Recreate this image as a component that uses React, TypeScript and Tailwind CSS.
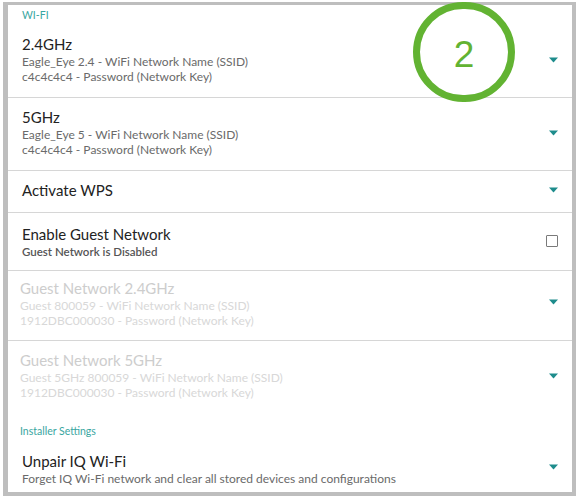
import React from "react";

const font = { fontFamily: "Lato, 'Open Sans', sans-serif" };

function Arrow() {
  return (
    <svg width="9" height="6" viewBox="0 0 9 6" className="block">
      <path d="M0 0.5 L9 0.5 L4.5 5.5 Z" fill="#1e8c8c" />
    </svg>
  );
}

type RowProps = {
  title: string;
  lines?: string[];
  disabled?: boolean;
  h: string;
  pt: string;
  divider?: boolean;
  arrowTop?: string;
};

function Row({ title, lines = [], disabled, h, pt, divider = true, arrowTop }: RowProps) {
  return (
    <div className={`relative flex ${h} ${divider ? "border-b border-[#d6d6d6]" : ""}`}>
      <div className={`flex-1 ${pt} ${disabled ? "pl-[12px]" : "pl-[14px]"}`}>
        <div className={`text-[15px] leading-[20px] ${disabled ? "text-[#cdcdcd]" : "text-[#222222]"}`}>{title}</div>
        {lines.map((l) => (
          <div
            key={l}
            className={`text-[12px] leading-[15px] ${disabled ? "text-[#d8d8d8]" : "text-[#6a6a6a]"}`}
          >
            {l}
          </div>
        ))}
      </div>
      {arrowTop && (
        <div className={`absolute right-[14px] ${arrowTop}`}>
          <Arrow />
        </div>
      )}
    </div>
  );
}

export default function App() {
  return (
    <div className="w-[580px] h-[499px] bg-white relative overflow-hidden" style={font}>
      <div className="ml-[3px] mt-[2px] w-[573px] h-[494px] border-l-[5px] border-t-[3px] border-r-[4px] border-b-[4px] border-[#bebebe] flex flex-col">
        <div className="h-[24px] pt-[4px] pl-[14px] text-[10.5px] leading-[12px] text-[#3aa6a1]">WI-FI</div>
        <Row
          title="2.4GHz"
          lines={["Eagle_Eye 2.4 - WiFi Network Name (SSID)", "c4c4c4c4 - Password (Network Key)"]}
          h="h-[69px]"
          pt="pt-[5px]"
          arrowTop="top-[28px]"
        />
        <Row
          title="5GHz"
          lines={["Eagle_Eye 5 - WiFi Network Name (SSID)", "c4c4c4c4 - Password (Network Key)"]}
          h="h-[73px]"
          pt="pt-[9px]"
          arrowTop="top-[32px]"
        />
        <Row title="Activate WPS" h="h-[42px]" pt="pt-[9px]" arrowTop="top-[16px]" />
        <div className="relative flex h-[58px] border-b border-[#d6d6d6]">
          <div className="flex-1 pt-[11px] pl-[14px]">
            <div className="text-[15px] leading-[20px] text-[#222222]">Enable Guest Network</div>
            <div className="text-[11.5px] leading-[15px] text-[#555555] font-semibold">Guest Network is Disabled</div>
          </div>
          <div className="absolute right-[14px] top-[22px] w-[12px] h-[12px] border-[1.5px] border-[#7a7a7a] rounded-[1px]" />
        </div>
        <Row
          title="Guest Network 2.4GHz"
          lines={["Guest 800059 - WiFi Network Name (SSID)", "1912DBC000030 - Password (Network Key)"]}
          disabled
          h="h-[70px]"
          pt="pt-[7px]"
          arrowTop="top-[28px]"
        />
        <Row
          title="Guest Network 5GHz"
          lines={["Guest 5GHz 800059 - WiFi Network Name (SSID)", "1912DBC000030 - Password (Network Key)"]}
          disabled
          divider={false}
          h="h-[74px]"
          pt="pt-[9px]"
          arrowTop="top-[32px]"
        />
        <div className="h-[30px] pt-[10px] pl-[12px] text-[10.5px] leading-[12px] text-[#3aa6a1]">Installer Settings</div>
        <Row
          title="Unpair IQ Wi-Fi"
          lines={["Forget IQ Wi-Fi network and clear all stored devices and configurations"]}
          divider={false}
          h="flex-1"
          pt="pt-[6px]"
          arrowTop="top-[19px]"
        />
      </div>
      <div className="absolute left-[413px] top-[2px] w-[102px] h-[100px] rounded-full border-[7px] border-[#62b332] flex items-center justify-center">
        <span className="text-[37px] leading-none text-[#62b332] mt-[4px]" style={{ fontFamily: "'Liberation Sans', Arial, sans-serif" }}>
          2
        </span>
      </div>
    </div>
  );
}
